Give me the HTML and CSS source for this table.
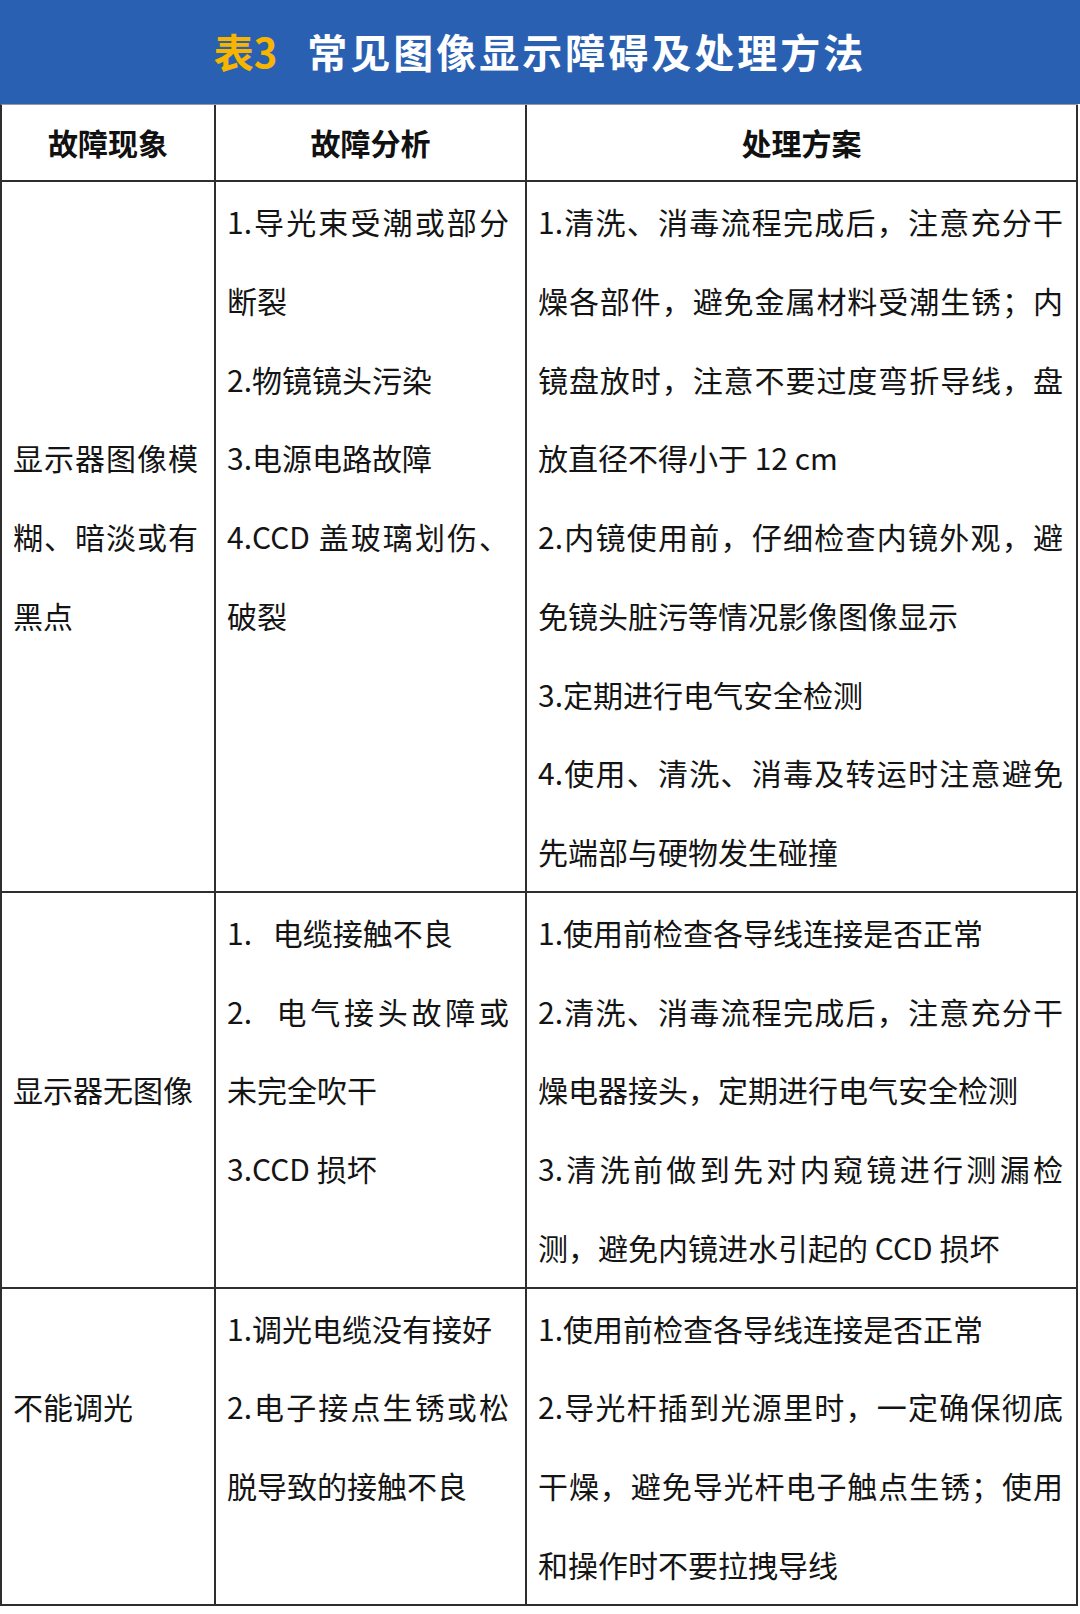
FILE: index.html
```html
<!DOCTYPE html>
<html lang="zh-CN">
<head>
<meta charset="utf-8">
<title>表3 常见图像显示障碍及处理方法</title>
<link rel="stylesheet" href="styles.css">
</head>
<body>
<div class="page">
  <header class="title-bar">
    <h1 class="title"><span class="title-num">表3</span><span class="title-text">常见图像显示障碍及处理方法</span></h1>
  </header>
  <table class="fault-table">
    <colgroup>
      <col class="col-a">
      <col class="col-b">
      <col class="col-c">
    </colgroup>
    <thead>
      <tr>
        <th>故障现象</th>
        <th>故障分析</th>
        <th>处理方案</th>
      </tr>
    </thead>
    <tbody>
      <tr>
        <td class="symptom">显示器图像模糊、暗淡或有黑点</td>
        <td class="cause">
          <p>1.导光束受潮或部分断裂</p>
          <p>2.物镜镜头污染</p>
          <p>3.电源电路故障</p>
          <p>4.CCD 盖玻璃划伤、破裂</p>
        </td>
        <td class="fix">
          <p>1.清洗、消毒流程完成后，注意充分干燥各部件，避免金属材料受潮生锈；内镜盘放时，注意不要过度弯折导线，盘放直径不得小于 12 cm</p>
          <p>2.内镜使用前，仔细检查内镜外观，避免镜头脏污等情况影像图像显示</p>
          <p>3.定期进行电气安全检测</p>
          <p>4.使用、清洗、消毒及转运时注意避免先端部与硬物发生碰撞</p>
        </td>
      </tr>
      <tr>
        <td class="symptom">显示器无图像</td>
        <td class="cause">
          <p class="spaced">1. 电缆接触不良</p>
          <p class="spaced">2. 电气接头故障或未完全吹干</p>
          <p>3.CCD 损坏</p>
        </td>
        <td class="fix">
          <p>1.使用前检查各导线连接是否正常</p>
          <p>2.清洗、消毒流程完成后，注意充分干燥电器接头，定期进行电气安全检测</p>
          <p>3.清洗前做到先对内窥镜进行测漏检测，避免内镜进水引起的 CCD 损坏</p>
        </td>
      </tr>
      <tr>
        <td class="symptom symptom-raised">不能调光</td>
        <td class="cause">
          <p>1.调光电缆没有接好</p>
          <p>2.电子接点生锈或松脱导致的接触不良</p>
        </td>
        <td class="fix">
          <p>1.使用前检查各导线连接是否正常</p>
          <p>2.导光杆插到光源里时，一定确保彻底干燥，避免导光杆电子触点生锈；使用和操作时不要拉拽导线</p>
        </td>
      </tr>
    </tbody>
  </table>
</div>
</body>
</html>
```

FILE: styles.css
```css
* {
  box-sizing: border-box;
}

html, body {
  margin: 0;
  padding: 0;
  background: #ffffff;
}

body {
  font-family: "Noto Sans CJK SC", "Noto Sans", sans-serif;
  color: #141414;
}

.page {
  width: 1080px;
}

.title-bar {
  height: 104px;
  background: #2a60b2;
  display: flex;
  align-items: center;
  justify-content: center;
}

.title {
  margin: 0;
  font-size: 40px;
  font-weight: 700;
  line-height: 1;
  letter-spacing: 3px;
  display: flex;
  gap: 30px;
  padding-bottom: 2px;
}

.title-num {
  color: #f7b500;
  letter-spacing: 0;
}

.title-text {
  color: #ffffff;
}

.fault-table {
  width: 1078px;
  table-layout: fixed;
  border-collapse: separate;
  border-spacing: 0;
  border-left: 2px solid #2e2e2e;
  border-top: 1px solid #9a9a9a;
  font-size: 30px;
}

.col-a { width: 214px; }
.col-b { width: 311px; }
.col-c { width: 551px; }

.fault-table th,
.fault-table td {
  border-right: 2px solid #2e2e2e;
  border-bottom: 2px solid #2e2e2e;
  padding: 0 11px;
}

.fault-table th {
  font-weight: 700;
  line-height: 75px;
  text-align: center;
  color: #111111;
}

.fault-table td {
  line-height: 78.75px;
  text-align: justify;
  vertical-align: top;
}

.fault-table td.symptom {
  vertical-align: middle;
  padding-right: 16px;
}

.fault-table td.symptom-raised {
  padding-bottom: 78.75px;
}

.fault-table td.cause {
  padding-right: 16px;
}

.fault-table td.fix {
  padding-right: 13px;
}

.fault-table p {
  margin: 0;
}

.fault-table p.spaced {
  word-spacing: 14px;
}
```
